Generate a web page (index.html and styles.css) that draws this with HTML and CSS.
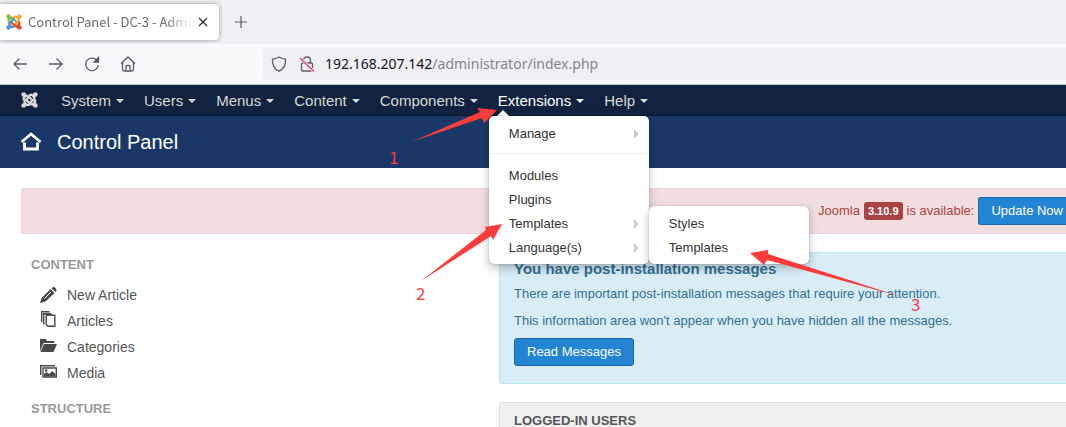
FILE: index.html
```html
<!DOCTYPE html>
<html lang="en">
<head>
<meta charset="utf-8">
<title>Control Panel - DC-3 - Administration</title>
<link rel="stylesheet" href="styles.css">
</head>
<body>
<svg class="defs" aria-hidden="true">
  <symbol id="knot" viewBox="0 0 16 16">
    <g fill="none" stroke-width="2.2">
      <path class="k1" d="M2.6 8.4V5.5L5 3.6L7 4.4L11.2 8.6"/>
      <path class="k2" d="M7.4 3.4L10 2.8L12.6 4.6V7L7.6 11.6"/>
      <path class="k3" d="M13.2 7.6V10.5L11 12.8L8.8 11.8L4.6 7.6"/>
      <path class="k4" d="M8.6 12.6L5.6 13L3.4 11V9L8.4 4.4"/>
    </g>
    <circle class="d1" cx="2.5" cy="2.5" r="2.2"/>
    <circle class="d2" cx="13.5" cy="2.5" r="2.2"/>
    <circle class="d3" cx="13.5" cy="13.5" r="2.2"/>
    <circle class="d4" cx="2.5" cy="13.5" r="2.2"/>
    <path class="k1" d="M3 3L5 5" stroke-width="2.2"/>
    <path class="k2" d="M13 3L11 5" stroke-width="2.2"/>
    <path class="k3" d="M13 13L11 11" stroke-width="2.2"/>
    <path class="k4" d="M3 13L5 11" stroke-width="2.2"/>
  </symbol>
</svg>

<div class="tabstrip">
  <div class="tab">
    <svg class="favicon" width="16" height="16"><use href="#knot"/></svg>
    <span class="tab-title">Control Panel - DC-3 - Admin</span>
    <button class="icon-btn tab-close" aria-label="Close tab">
      <svg width="10" height="10" viewBox="0 0 10 10"><path d="M1 1L9 9M9 1L1 9" stroke="#2b2a33" stroke-width="1.2"/></svg>
    </button>
  </div>
  <button class="icon-btn" aria-label="New tab">
    <svg width="12" height="12" viewBox="0 0 12 12"><path d="M6 0V12M0 6H12" stroke="#5b5b66" stroke-width="1.2"/></svg>
  </button>
</div>

<div class="toolbar">
  <div class="tools">
    <button class="icon-btn" aria-label="Back"><svg width="16" height="16" viewBox="0 0 16 16"><path d="M15 8H2M7.500 2.500L2 8L7.500 13.500"/></svg></button>
    <button class="icon-btn" aria-label="Forward"><svg width="16" height="16" viewBox="0 0 16 16"><path d="M1 8H14M8.500 2.500L14 8L8.500 13.500"/></svg></button>
    <button class="icon-btn" aria-label="Reload"><svg width="16" height="16" viewBox="0 0 16 16"><path d="M13 4.500A6.300 6.300 0 1 0 14.300 9"/><path d="M14.500 1.500V6H10Z" fill="#5b5b66"/></svg></button>
    <button class="icon-btn" aria-label="Home"><svg width="16" height="16" viewBox="0 0 16 16"><path d="M1 7.500L8 1L15 7.500M2.500 6.500V13.500Q2.500 15 4 15H12Q13.500 15 13.500 13.500V6.500M6 15V10.500Q6 9.500 7 9.500H9Q10 9.500 10 10.500V15"/></svg></button>
  </div>
  <div class="urlbar">
    <svg width="16" height="16" viewBox="0 0 16 16"><path d="M8 1C10 2.300 12 3 14.500 3.200C15 9 12.500 13 8 15.200C3.500 13 1 9 1.500 3.200C4 3 6 2.300 8 1Z"/></svg>
    <svg width="16" height="16" viewBox="0 0 16 16"><path d="M4.500 7V4.500Q4.500 1 8 1Q11.500 1 11.500 4.500V7M3.500 7H12.500Q13.500 7 13.500 8V14Q13.500 15 12.500 15H3.500Q2.500 15 2.500 14V8Q2.500 7 3.500 7Z"/><path d="M1 2L15 15.500" stroke="#f0f0f4" stroke-width="3"/><path d="M1 2L15 15.500" stroke="#e8395f" stroke-width="1.300"/></svg>
    <span class="url"><b>192.168.207.142</b>/administrator/index.php</span>
  </div>
</div>

<nav class="navbar">
  <a class="brand" href="#" aria-label="Joomla"><svg width="17" height="16" viewBox="0 0 16 16" preserveAspectRatio="none"><use href="#knot"/></svg></a>
  <ul class="menu">
    <li><a href="#">System<i class="caret"></i></a></li>
    <li><a href="#">Users<i class="caret"></i></a></li>
    <li><a href="#">Menus<i class="caret"></i></a></li>
    <li><a href="#">Content<i class="caret"></i></a></li>
    <li><a href="#">Components<i class="caret"></i></a></li>
    <li class="open"><a href="#">Extensions<i class="caret"></i></a>
      <ul class="dropdown">
        <li><a class="more" href="#">Manage</a></li>
        <li class="divider"></li>
        <li><a href="#">Modules</a></li>
        <li><a href="#">Plugins</a></li>
        <li class="parent"><a class="more" href="#">Templates</a>
          <ul class="dropdown submenu">
            <li><a href="#">Styles</a></li>
            <li><a href="#">Templates</a></li>
          </ul>
        </li>
        <li><a class="more" href="#">Language(s)</a></li>
      </ul>
    </li>
    <li><a href="#">Help<i class="caret"></i></a></li>
  </ul>
</nav>

<header class="header">
  <svg width="22" height="20" viewBox="0 0 22 20"><path d="M1.500 10L11 2L20.500 10M4.500 10.500V17H17.500V10.500" fill="none" stroke="#fff" stroke-width="2.800"/></svg>
  <h1>Control Panel</h1>
</header>

<main class="main">
  <div class="alert update">
    <span>Joomla</span><span class="badge">3.10.9</span><span>is available:</span>
    <button class="btn">Update Now</button>
  </div>
  <div class="columns">
    <aside class="sidebar">
      <h2>CONTENT</h2>
      <ul>
        <li><a href="#"><svg width="17" height="16" viewBox="0 0 17 16"><path d="M0 16L1.500 11L10.500 2L14.500 6L5.500 14.500ZM11.500 1.200L12.500 0.300Q14 -0.400 15.500 1Q17 2.500 16.200 4L15.400 5Z" fill="#4a4a4a"/><path d="M4.500 11.500L11 5" stroke="#fff"/></svg>New Article</a></li>
        <li><a href="#"><svg class="raised" width="17" height="16" viewBox="0 0 17 16"><path d="M1.700 11V.7H9.500M3.700 13.500V2.700H11.500M6.200 4.200H14.800V15.300H8L6.200 13.500Z" fill="none" stroke="#4a4a4a" stroke-width="1.400"/></svg>Articles</a></li>
        <li><a href="#"><svg class="raised" width="17" height="16" viewBox="0 0 17 16"><path d="M0 14V2H6L7 4H14V6H3.500L1 12ZM4 7H17L13.500 15H0.500Z" fill="#4a4a4a"/></svg>Categories</a></li>
        <li><a href="#"><svg class="raised" width="17" height="16" viewBox="0 0 17 16"><path d="M.7 12V2.700H15M3 5H16.300V14H3Z" fill="none" stroke="#4a4a4a" stroke-width="1.400"/><path d="M4 13.500V11L6.500 9L9 11L12.500 8L15.500 11V13.500Z" fill="#4a4a4a"/><circle cx="6.200" cy="7.500" r="1.300" fill="#4a4a4a"/></svg>Media</a></li>
      </ul>
      <h2>STRUCTURE</h2>
    </aside>
    <section class="content">
      <div class="alert info">
        <h3>You have post-installation messages</h3>
        <p>There are important post-installation messages that require your attention.</p>
        <p>This information area won't appear when you have hidden all the messages.</p>
        <button class="btn">Read Messages</button>
      </div>
      <div class="panel"><h2>LOGGED-IN USERS</h2></div>
    </section>
  </div>
</main>

<svg class="notes" width="1066" height="427" viewBox="0 0 1066 427" fill="#fc3c3a">
  <path d="M411 142L480 112L477 108L497 110L484 123L482 118Z"/>
  <path d="M421 281L486 230L485 227L502 224L493 240L491 236Z"/>
  <path d="M750 253L768 250L768 254L902 297L767 260L764 265Z"/>
  <text x="389" y="164">1</text>
  <text x="416" y="300">2</text>
  <text x="911" y="311">3</text>
</svg>
</body>
</html>
```
FILE: styles.css
```css
* { box-sizing: border-box; }
body { margin: 0; height: 100vh; overflow: hidden; background: #fff; font: 13px/18px "Liberation Sans", Arial, sans-serif; color: #333; }
ul { list-style: none; margin: 0; padding: 0; }
a { color: inherit; text-decoration: none; }
h1, h2, h3, p { margin: 0; }
button { font: inherit; }
.defs { display: none; }

/* browser chrome */
.tabstrip { display: flex; align-items: center; gap: 15px; height: 44px; background: #f0f0f4; }
.tab { display: flex; align-items: center; width: 219px; height: 36px; padding: 0 6px; gap: 6px; border-radius: 0 4px 4px 0; background: #fff; box-shadow: 0 0 4px rgba(0, 0, 0, .4); }
.favicon { flex: none; }
.tab-title { flex: 1; overflow: hidden; white-space: nowrap; font: 13px/18px "Noto Sans CJK SC", sans-serif; color: #6a6a70; -webkit-mask-image: linear-gradient(90deg, #000 82%, transparent); mask-image: linear-gradient(90deg, #000 82%, transparent); }
.icon-btn { display: flex; flex: none; align-items: center; justify-content: center; padding: 0; border: 0; background: none; }
.tab-close { width: 20px; height: 20px; margin-left: -6px; }
.tabstrip > .icon-btn { width: 14px; }
.toolbar { display: flex; align-items: center; height: 41px; background: #f9f9fb; border-bottom: 1px solid #c8c8cc; }
.toolbar svg { fill: none; stroke: #5b5b66; stroke-width: 1.3; }
.tools { display: flex; gap: 20px; width: 263px; padding-left: 12px; }
.tools .icon-btn { width: 16px; }
.urlbar { display: flex; flex: 1; align-items: center; gap: 12px; height: 32px; padding-left: 8px; border-radius: 4px 0 0 4px; background: #f0f0f4; }
.url { margin-left: -2px; font: 14px/20px "Noto Sans", sans-serif; color: #84848c; }
.url b { font-weight: 400; color: #15141a; }

/* symbol colouring */
.favicon { --a: #7ac143; --b: #f9a541; --c: #f44321; --d: #5091cd; }
.brand { --a: #d9d9d9; --b: #d9d9d9; --c: #d9d9d9; --d: #d9d9d9; }
.k1 { stroke: var(--a); }
.k2 { stroke: var(--b); }
.k3 { stroke: var(--c); }
.k4 { stroke: var(--d); }
.d1 { fill: var(--a); }
.d2 { fill: var(--b); }
.d3 { fill: var(--c); }
.d4 { fill: var(--d); }

/* admin navigation */
.navbar { display: flex; align-items: center; height: 31px; padding-left: 21px; background: #10223e; border-bottom: 1px solid #0c192e; font-size: 15px; color: #d9d9d9; }
.brand { display: flex; width: 30px; }
.menu { display: flex; }
.menu > li { position: relative; }
.menu > li > a { display: flex; align-items: center; gap: 5px; height: 30px; padding: 2px 10px 0; }
.caret { border: 4px solid transparent; border-top-color: currentColor; border-bottom: 0; }
.open > a { color: #fff; }
.open > a::after { content: ""; position: absolute; left: 9px; bottom: -1px; border: 6px solid transparent; border-bottom-color: #fff; border-top: 0; }
.dropdown { position: absolute; z-index: 2; top: 31px; left: 1px; width: 160px; padding: 6px 0 4px; border-radius: 5px; background: #fff; box-shadow: 0 0 1px rgba(0, 0, 0, .6), 0 4px 10px rgba(0, 0, 0, .25); font-size: 13px; color: #333; }
.dropdown a { display: flex; align-items: center; justify-content: space-between; height: 24px; padding: 0 10px 0 20px; }
.more::after { content: ""; border: 5px solid transparent; border-left-color: #ccc; border-right: 0; }
.divider { height: 1px; margin: 7px 1px 10px; background: #eee; }
.parent { position: relative; }
.submenu { top: -6px; left: 160px; }

.header { display: flex; align-items: center; gap: 15px; height: 52px; padding-left: 20px; background: #1a3867; color: #fff; }
.header h1 { font-size: 20px; line-height: 24px; font-weight: 400; }

/* dashboard */
.main { padding: 20px 0 0 21px; }
.alert { border: 1px solid; border-right: 0; border-radius: 3px 0 0 3px; }
.update { display: flex; align-items: center; justify-content: flex-end; gap: 4px; height: 46px; border-color: #eed3d7; background: #f2dede; color: #a94442; }
.badge { padding: 0 4px; border-radius: 3px; background: #a94442; color: #fff; font-size: 11px; font-weight: 700; }
.btn { height: 28px; padding: 0 12px; border: 1px solid #1a68ad; border-radius: 3px; background: #2384d3; color: #fff; }
.update .btn { border-right: 0; border-radius: 3px 0 0 3px; padding-right: 3px; }
.columns { display: flex; margin-top: 18px; }
.sidebar { width: 478px; padding: 4px 0 0 10px; color: #555; }
h2 { font-size: 13px; line-height: 18px; font-weight: 700; }
.sidebar h2 { color: #999; }
.sidebar ul { padding: 8px 0 14px 9px; font-size: 14px; }
.sidebar li a { display: flex; align-items: center; gap: 10px; height: 26px; }
.raised { margin-bottom: 4px; }
.content { flex: 1; }
.info { height: 132px; padding: 7px 14px; border-color: #bce8f1; background: #d9edf7; color: #31708f; }
.info h3 { font-size: 15px; line-height: 18px; }
.info p { margin: 7px 0 9px; }
.info p + p { margin-bottom: 8px; }
.panel { margin-top: 18px; padding: 9px 14px 0; border: 1px solid #ddd; border-width: 1px 0 0 1px; border-radius: 3px 0 0 0; background: #f0f0f0; color: #555; }

/* drawn notes */
.notes { position: absolute; z-index: 5; top: 0; left: 0; pointer-events: none; }
.notes text { font: 17px "Noto Sans CJK SC", sans-serif; }
```
